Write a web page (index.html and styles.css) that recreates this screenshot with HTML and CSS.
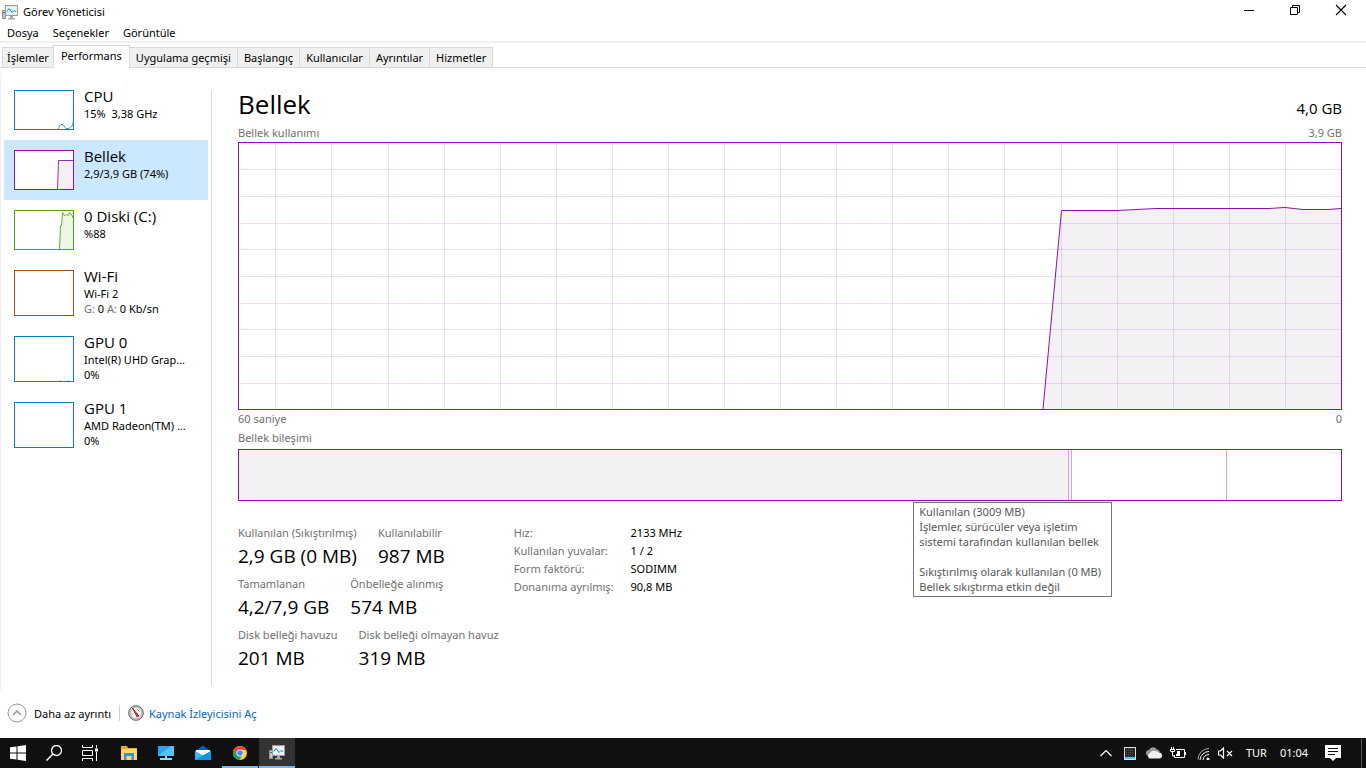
FILE: index.html
```html
<!DOCTYPE html>
<html lang="tr">
<head>
    <meta charset="UTF-8">
    <meta name="viewport" content="width=device-width, initial-scale=1">
    <title>Görev Yöneticisi</title>
    <link rel="stylesheet" href="styles.css">
</head>
<body>
    <!-- Shared icons -->
    <svg class="defs" aria-hidden="true">
        <symbol id="icon-taskmgr" viewBox="0 0 16 16">
            <rect x="0.5" y="5.5" width="3" height="8" fill="#c4c8cb" stroke="#8e9498"/>
            <path d="M1 7.5h2" stroke="#5f6569"/>
            <rect x="3.5" y="0.5" width="12" height="10" fill="#e9ebec" stroke="#9a9fa3"/>
            <rect x="5" y="2" width="9" height="7" fill="#e6f7ff"/>
            <path d="M5 6.5l2-3 3 4 2-2 2 1" fill="none" stroke="#1a86c7"/>
            <path d="M8 11h3v2h2v1.500H6V13h2z" fill="#a6abae"/>
        </symbol>
    </svg>

    <header class="title-bar">
        <svg class="app-icon" width="16" height="16"><use href="#icon-taskmgr"/></svg>
        <span class="app-title">Görev Yöneticisi</span>
        <div class="window-buttons">
            <button type="button" aria-label="Simge durumuna küçült">
                <svg width="12" height="12" viewBox="0 0 12 12"><path d="M1 6.500h10" stroke="#000"/></svg>
            </button>
            <button type="button" aria-label="Önceki boyut">
                <svg width="12" height="12" viewBox="0 0 12 12"><path d="M1.500 3.500h7v7h-7zM3.500 3.500v-2h7v7h-2" fill="none" stroke="#000"/></svg>
            </button>
            <button type="button" aria-label="Kapat">
                <svg width="12" height="12" viewBox="0 0 12 12"><path d="M1 1l10 10M11 1L1 11" stroke="#000" stroke-width="1.100"/></svg>
            </button>
        </div>
    </header>

    <nav class="menu-bar">
        <button type="button">Dosya</button>
        <button type="button">Seçenekler</button>
        <button type="button">Görüntüle</button>
    </nav>

    <div class="tabs" role="tablist">
        <button type="button" role="tab">İşlemler</button>
        <button type="button" role="tab" class="active" aria-selected="true">Performans</button>
        <button type="button" role="tab">Uygulama geçmişi</button>
        <button type="button" role="tab">Başlangıç</button>
        <button type="button" role="tab">Kullanıcılar</button>
        <button type="button" role="tab">Ayrıntılar</button>
        <button type="button" role="tab">Hizmetler</button>
    </div>

    <div class="content">
        <aside class="sidebar">
            <button type="button" class="device">
                <svg class="thumb cpu" viewBox="0 0 60 40">
                    <path d="M44 39l2-3.500 1-1h2l2 3 1 1h3l2-2 1.500-1 1-5" fill="none" stroke="#117dbb" stroke-width="0.800"/>
                    <rect x="0.5" y="0.5" width="59" height="39"/>
                </svg>
                <span class="device-text">
                    <span class="device-name">CPU</span>
                    <span>15%&nbsp; 3,38 GHz</span>
                </span>
            </button>
            <button type="button" class="device selected">
                <svg class="thumb memory" viewBox="0 0 60 40">
                    <rect width="60" height="40" class="back"/>
                    <path d="M43.500 39.500l1-29H60v29z" fill="#f4f1f5" stroke="#8b12ae" stroke-width="0.900"/>
                    <rect x="0.5" y="0.5" width="59" height="39"/>
                </svg>
                <span class="device-text">
                    <span class="device-name">Bellek</span>
                    <span>2,9/3,9 GB (74%)</span>
                </span>
            </button>
            <button type="button" class="device">
                <svg class="thumb disk" viewBox="0 0 60 40">
                    <path d="M45.500 39.500l1-24h1l1-13 2 3 2-1 2 1 1-3 2 2 2 4v31z" fill="#eef6e7" stroke="#4da60c" stroke-width="0.900"/>
                    <rect x="0.5" y="0.5" width="59" height="39"/>
                </svg>
                <span class="device-text">
                    <span class="device-name">0 Diski (C:)</span>
                    <span>%88</span>
                </span>
            </button>
            <button type="button" class="device tall">
                <svg class="thumb wifi" viewBox="0 0 60 46"><rect x="0.5" y="0.5" width="59" height="45"/></svg>
                <span class="device-text">
                    <span class="device-name">Wi-Fi</span>
                    <span>Wi-Fi 2</span>
                    <span><span class="muted">G:</span> 0 <span class="muted">A:</span> 0 Kb/sn</span>
                </span>
            </button>
            <button type="button" class="device tall">
                <svg class="thumb cpu" viewBox="0 0 60 46">
                    <path d="M46 44.500h1M54 44.500h1" stroke-opacity="0.6"/>
                    <rect x="0.5" y="0.5" width="59" height="45"/>
                </svg>
                <span class="device-text">
                    <span class="device-name">GPU 0</span>
                    <span>Intel(R) UHD Grap...</span>
                    <span>0%</span>
                </span>
            </button>
            <button type="button" class="device tall">
                <svg class="thumb cpu" viewBox="0 0 60 46"><rect x="0.5" y="0.5" width="59" height="45"/></svg>
                <span class="device-text">
                    <span class="device-name">GPU 1</span>
                    <span>AMD Radeon(TM) ...</span>
                    <span>0%</span>
                </span>
            </button>
        </aside>

        <main class="details">
            <div class="heading">
                <h1>Bellek</h1>
                <span class="total">4,0 GB</span>
            </div>
            <div class="caption"><span>Bellek kullanımı</span><span>3,9 GB</span></div>
            <div class="chart">
                <svg viewBox="0 0 1102 266" preserveAspectRatio="none">
                    <path class="area" d="M804 266L822.500 67.500H878L917 65.500H1030L1046 64.500L1064 66.500H1089L1102 65.500V266z"/>
                    <path class="grid" d="M0 26.500H1102M0 53.500H1102M0 80.500H1102M0 106.500H1102M0 133.500H1102M0 160.500H1102M0 186.500H1102M0 213.500H1102M0 240.500H1102"/>
                    <path class="grid" d="M36.500 0V266M92.500 0V266M149.500 0V266M205.500 0V266M261.500 0V266M317.500 0V266M373.500 0V266M429.500 0V266M485.500 0V266M541.500 0V266M597.500 0V266M653.500 0V266M709.500 0V266M765.500 0V266M822.500 0V266M878.500 0V266M934.500 0V266M990.500 0V266M1046.500 0V266"/>
                    <path class="line" d="M804 266L822.500 67.500H878L917 65.500H1030L1046 64.500L1064 66.500H1089L1102 65.500"/>
                </svg>
            </div>
            <div class="caption below"><span>60 saniye</span><span>0</span></div>

            <div class="caption">Bellek bileşimi</div>
            <div class="composition">
                <div class="in-use"></div>
                <div class="modified"></div>
                <div class="standby"></div>
                <div class="free"></div>
                <div class="tooltip" role="tooltip">
                    <p>Kullanılan (3009 MB)<br>İşlemler, sürücüler veya işletim<br>sistemi tarafından kullanılan bellek</p>
                    <p>Sıkıştırılmış olarak kullanılan (0 MB)<br>Bellek sıkıştırma etkin değil</p>
                </div>
            </div>

            <div class="stats">
                <div class="counters">
                    <dl>
                        <div><dt>Kullanılan (Sıkıştırılmış)</dt><dd>2,9 GB (0 MB)</dd></div>
                        <div><dt>Kullanılabilir</dt><dd>987 MB</dd></div>
                    </dl>
                    <dl>
                        <div><dt>Tamamlanan</dt><dd>4,2/7,9 GB</dd></div>
                        <div><dt>Önbelleğe alınmış</dt><dd>574 MB</dd></div>
                    </dl>
                    <dl>
                        <div><dt>Disk belleği havuzu</dt><dd>201 MB</dd></div>
                        <div><dt>Disk belleği olmayan havuz</dt><dd>319 MB</dd></div>
                    </dl>
                </div>
                <table class="hardware">
                    <tr><th>Hız:</th><td>2133 MHz</td></tr>
                    <tr><th>Kullanılan yuvalar:</th><td>1 / 2</td></tr>
                    <tr><th>Form faktörü:</th><td>SODIMM</td></tr>
                    <tr><th>Donanıma ayrılmış:</th><td>90,8 MB</td></tr>
                </table>
            </div>
        </main>
    </div>

    <footer class="footer">
        <button type="button" class="fewer">
            <svg width="20" height="20" viewBox="0 0 20 20" fill="none"><circle cx="10" cy="10" r="9" stroke="#999"/><path d="M6 12l4-4 4 4" stroke="#999" stroke-width="1.600"/></svg>
            Daha az ayrıntı
        </button>
        <a class="monitor" href="#">
            <svg width="16" height="16" viewBox="0 0 16 16"><circle cx="8" cy="8" r="7.300" fill="#d5d5d5" stroke="#5c5c5c"/><circle cx="8" cy="8" r="5.500" fill="#fff" stroke="#999" stroke-width="0.700"/><path d="M4.500 3l6.500 8-2 1z" fill="#e0201b" stroke="#c1120f" stroke-width="0.800"/><path d="M9 4l3 3M4 8v3" stroke="#aaa" stroke-width="0.800"/></svg>
            Kaynak İzleyicisini Aç
        </a>
    </footer>

    <div class="taskbar">
        <button type="button" aria-label="Başlat">
            <svg width="16" height="16" viewBox="0 0 16 16"><path d="M0 2.300L6.500 1.400V7.500H0zM7.500 1.200L16 0v7.500H7.500zM0 8.500h6.500v6.100L0 13.700zM7.500 8.500H16V16l-8.500-1.200z" fill="#fff"/></svg>
        </button>
        <button type="button" aria-label="Ara">
            <svg width="16" height="16" viewBox="0 0 16 16"><circle cx="10.500" cy="5.500" r="5" fill="none" stroke="#fff" stroke-width="1.300"/><path d="M7 9L0.500 15.500" stroke="#fff" stroke-width="1.500"/></svg>
        </button>
        <button type="button" aria-label="Görev Görünümü">
            <svg width="16" height="16" viewBox="0 0 16 16" fill="none" stroke="#fff"><path d="M0.500 0v2.500h10V0M0.500 16v-2.500h10V16M0.500 5.500h10v5H0.500zM14.500 0v3M14.500 7v9"/><path d="M13 5h3" stroke-width="3"/></svg>
        </button>
        <span class="apps">
            <button type="button" aria-label="Dosya Gezgini">
                <svg width="16" height="16" viewBox="0 0 16 16"><path d="M0 1h6l1 2h9v12H0z" fill="#e9a821"/><path d="M0 4h16v11H0z" fill="#ffd667"/><path d="M3 8h10v7h-2.500v-4h-5v4H3z" fill="#3c8fdb"/></svg>
            </button>
            <button type="button" aria-label="Bu Bilgisayar">
                <svg width="16" height="16" viewBox="0 0 16 16"><rect x="0" y="1" width="16" height="10" fill="#2ba1ec"/><path d="M0 11L13 1h3v10z" fill="#56c0fa"/><path d="M7 11h2v2H7zM2 13h12v2H2z" fill="#9bd7f5"/></svg>
            </button>
            <button type="button" aria-label="Posta">
                <svg width="16" height="16" viewBox="0 0 16 16"><path d="M0 6l8-5.500L16 6v9H0z" fill="#0f5ca8"/><path d="M1 5h14v5H1z" fill="#fff"/><path d="M0 6l8 4.500L16 6v9H0z" fill="#37b5f1"/><path d="M0 15L16 6v9z" fill="#1792dc"/></svg>
            </button>
            <button type="button" class="open" aria-label="Google Chrome">
                <svg width="16" height="16" viewBox="0 0 16 16"><circle cx="8" cy="8" r="7" fill="#ffcd40"/><path d="M2 4.400a7 7 0 0 1 12.100.6H8L5 9.600z" fill="#e8453c"/><path d="M2 4.400A7 7 0 0 0 7.500 15l3-5.300L5 9.600z" fill="#17a05e"/><circle cx="8" cy="8" r="3.600" fill="#fff"/><circle cx="8" cy="8" r="2.800" fill="#4c8bf5"/></svg>
            </button>
            <button type="button" class="open current" aria-label="Görev Yöneticisi">
                <svg width="16" height="16"><use href="#icon-taskmgr"/></svg>
            </button>
        </span>
        <div class="tray">
            <button type="button" aria-label="Gizli simgeleri göster">
                <svg width="12" height="12" viewBox="0 0 12 12"><path d="M0.500 9L6 3.500 11.500 9" fill="none" stroke="#fff" stroke-width="1.200"/></svg>
            </button>
            <svg class="usage" width="12" height="13" viewBox="0 0 12 13"><rect x="0.500" y="0.500" width="11" height="12" fill="#222" stroke="#ddd"/><path d="M2.500 1v9M4.500 1v9M6.500 1v9M8.500 1v9" stroke="#555" stroke-dasharray="1 1"/><path d="M1 10h10v2H1z" fill="#4cc2ff"/></svg>
            <svg class="cloud" width="16" height="12" viewBox="0 0 16 12"><path d="M3 9a3 3 0 0 1 0-6 4.500 4.500 0 0 1 8-.5A4 4 0 0 1 14 5z" fill="#999"/><path d="M3.500 11.500A3 3 0 0 1 4 6a5 5 0 0 1 7-1.500 3.500 3.500 0 0 1 2 1 3 3 0 0 1 0 6z" fill="#f1f1f1"/></svg>
            <svg class="battery" width="16" height="12" viewBox="0 0 16 12"><path d="M6 2.500h8.500v8h-10V8M15.500 5v3" fill="none" stroke="#fff"/><path d="M7 4h3v5H6V7h1z" fill="#fff"/><path d="M1.500 0v2M3.500 0v2M0 2.500h5M0.500 2.500v2h4v-2M2.500 5v4h2" fill="none" stroke="#fff"/></svg>
            <svg class="signal" width="13" height="13" viewBox="0 0 13 13" fill="none" stroke="#fff"><path d="M1 12.500A11 11 0 0 1 12 1.500" stroke="#aaa"/><path d="M3 13A9 9 0 0 1 12 4.500M6 13a6 6 0 0 1 6-5.500"/><circle cx="11" cy="12" r="1.500" fill="#fff" stroke="none"/></svg>
            <svg class="speaker" width="15" height="12" viewBox="0 0 15 12" fill="none" stroke="#fff"><path d="M0.500 4H2.500L5.500 1v10L2.500 8h-2zM9 4l5 5M14 4L9 9" stroke-width="1.200"/></svg>
            <button type="button" class="language">TUR</button>
            <button type="button" class="clock">01:04</button>
            <button type="button" class="notify" aria-label="Bildirimler">
                <svg width="16" height="16" viewBox="0 0 16 16"><path d="M0 0h16v13h-5l-3 3-3-3H0z" fill="#fff"/><path d="M3 3.500h10M3 6.500h10M3 9.500h7" stroke="#101010"/></svg>
            </button>
        </div>
    </div>
</body>
</html>
```
FILE: styles.css
```css
* { box-sizing: border-box; }
body {
    display: flex;
    flex-direction: column;
    min-height: 100vh;
    margin: 0;
    background: #fff;
    color: #000;
    font-family: "Noto Sans", "Open Sans", sans-serif;
    font-size: 11px;
    line-height: 15px;
}
button { padding: 0; border: none; background: none; color: inherit; font: inherit; white-space: nowrap; }
svg { display: block; flex: none; }
.defs { position: absolute; width: 0; height: 0; }
p, h1, dl, dd { margin: 0; }

/* Title and menu */
.title-bar { display: flex; align-items: center; height: 22px; padding-left: 2px; }
.app-icon { margin-top: 3px; }
.app-title { margin-left: 5px; }
.window-buttons { display: flex; align-self: flex-start; margin-left: auto; padding-right: 2px; }
.window-buttons button { display: flex; justify-content: center; align-items: center; width: 46px; height: 20px; }
.menu-bar { display: flex; gap: 14px; height: 21px; padding: 3px 7px 0; border-bottom: 2px solid #f0f0f0; }
.menu-bar button { height: 15px; }

/* Tabs */
.tabs { display: flex; align-items: flex-end; height: 25px; padding-left: 2px; border-bottom: 1px solid #d9d9d9; }
.tabs button { height: 20px; margin-right: -1px; padding: 0 6px; border: 1px solid #d9d9d9; border-bottom: none; background: #f0f0f0; }
.tabs button:first-child { padding: 0 4px; }
.tabs .active { position: relative; height: 23px; margin-bottom: -1px; padding: 0 7px 4px; background: #fff; }

.content { display: flex; flex: 1; margin-top: 5px; border-left: 1px solid #f0f0f0; }

/* Device list */
.sidebar { width: 207px; flex: none; padding: 7px 0 0 3px; }
.device { display: flex; gap: 10px; width: 204px; height: 60px; padding: 0 10px; text-align: left; }
.device.tall { height: 66px; }
.device.selected { background: #cce8ff; }
.thumb { width: 60px; height: 40px; margin-top: 10px; }
.tall .thumb { height: 46px; }
.thumb rect { fill: none; }
.thumb .back { fill: #fff; stroke: none; }
.cpu { stroke: #117dbb; }
.memory { stroke: #8b12ae; }
.disk { stroke: #4da60c; }
.wifi { stroke: #a74f01; }
.device-text { display: flex; flex-direction: column; padding-top: 6px; }
.device-name { font-family: "Open Sans", sans-serif; font-size: 15px; line-height: 20px; }
.muted { color: #707070; }

/* Memory details */
.details { display: flex; flex-direction: column; flex: 1; margin: 17px 0 4px 3px; padding: 0 24px 0 26px; border-left: 1px solid #d9d9d9; }
.heading { display: flex; justify-content: space-between; align-items: flex-start; height: 35px; font-family: "Open Sans", sans-serif; }
.heading h1 { font-size: 26px; line-height: 29px; font-weight: 400; }
.total { font-size: 15px; line-height: 36px; }
.caption { display: flex; justify-content: space-between; padding-bottom: 2px; color: #707070; line-height: 15px; }
.caption.below { padding: 1px 0 4px; }
.chart { flex: 1; min-height: 160px; border: 1px solid #8b12ae; display: flex; }
.chart svg { width: 100%; height: 100%; flex: 1; }
.chart path { fill: none; vector-effect: non-scaling-stroke; }
.chart .area { fill: #f4f1f5; }
.chart .grid { stroke: #8b12ae; stroke-opacity: 0.14; }
.chart .line { stroke: #8b12ae; stroke-width: 1; }
.composition { position: relative; display: flex; height: 52px; margin-top: 2px; border: 1px solid #8b12ae; }
.composition .in-use { flex: 830; background: #f4f1f5; }
.composition .modified { width: 4px; border: solid #cfa8dc; border-width: 0 1px; background: #f4f1f5; }
.composition .standby { flex: 154; }
.composition .free { flex: 114; border-left: 1px solid #cfa8dc; }
.tooltip { position: absolute; top: 52px; right: 229px; padding: 1px 10px 2px 5px; border: 1px solid #767676; background: #fff; color: #575757; line-height: 15px; white-space: nowrap; }
.tooltip p + p { margin-top: 15px; }

/* Counters */
.stats { display: flex; gap: 15px; padding-top: 23px; height: 185px; }
.counters { display: flex; flex-direction: column; }
.counters dl { display: flex; gap: 21px; height: 51px; }
.counters dt { color: #707070; line-height: 18px; }
.counters dd { font-family: "Open Sans", sans-serif; font-size: 19px; line-height: 28px; }
.hardware { align-self: flex-start; border-collapse: collapse; line-height: 18px; }
.hardware th { padding: 0 17px 0 0; color: #707070; font-weight: 400; text-align: left; }
.hardware td { padding: 0; }

/* Footer */
.footer { display: flex; align-items: center; height: 48px; padding: 0 0 2px 7px; }
.fewer { display: flex; align-items: center; gap: 7px; padding-right: 8px; }
.monitor { display: flex; align-items: center; gap: 5px; padding-left: 8px; border-left: 1px solid #d0d0d0; color: #0066cc; text-decoration: none; }

/* Taskbar */
.taskbar { display: flex; height: 30px; background: #101010; color: #fff; }
.taskbar button { display: flex; justify-content: center; align-items: center; width: 36px; height: 30px; }
.apps { display: flex; gap: 1px; margin-left: 3px; }
.apps .open { padding-top: 2px; border-bottom: 2px solid #76b9ed; }
.apps .current { background: #333; }
.tray { display: flex; align-items: center; margin-left: auto; padding-right: 4px; border-right: 1px solid #555; margin-right: 4px; }
.tray button { width: auto; }
.usage { margin-left: 12px; }
.cloud { margin-left: 10px; }
.battery { margin-left: 8px; }
.signal { margin-left: 11px; }
.speaker { margin-left: 8px; }
.tray .language, .tray .clock { margin-left: 13px; padding-bottom: 2px; }
.tray .notify { margin: 0 16px 0 17px; }
```
